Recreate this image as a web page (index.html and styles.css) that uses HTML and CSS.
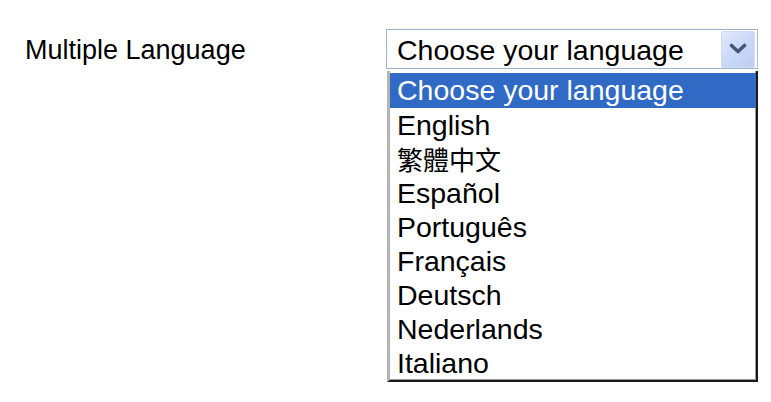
FILE: index.html
```html
<!DOCTYPE html>
<html lang="en">
<head>
    <meta charset="UTF-8">
    <title>Multiple Language</title>
    <link rel="stylesheet" href="styles.css">
</head>
<body>
    <div class="field">
        <div class="label">Multiple Language</div>
        <div class="picker">
            <div class="select">
                <span class="current">Choose your language</span>
                <span class="arrow">
                    <svg width="18" height="12" viewBox="0 0 18 12">
                        <path d="M2.5 2.5 L9 8.5 L15.5 2.5" fill="none" stroke="#46557a" stroke-width="3.6" stroke-linecap="round" stroke-linejoin="round"/>
                    </svg>
                </span>
            </div>
            <ul class="options">
                <li class="active">Choose your language</li>
                <li>English</li>
                <li class="cjk">繁體中文</li>
                <li>Español</li>
                <li>Português</li>
                <li>Français</li>
                <li>Deutsch</li>
                <li>Nederlands</li>
                <li>Italiano</li>
            </ul>
        </div>
    </div>
</body>
</html>
```

FILE: styles.css
```css
body {
    margin: 0;
    background-color: #fff;
    font-family: 'Liberation Sans', Arial, sans-serif;
    color: #000;
}
.field {
    display: flex;
    padding: 29px 0 0 25px;
}
.label {
    width: 361px;
    font-size: 27px;
    line-height: 41px;
    padding-top: 1px;
}
.picker {
    width: 372px;
}
.select {
    height: 38px;
    border: 1px solid #9fb4cc;
    border-right-color: #a9bcd2;
    display: flex;
    align-items: center;
    justify-content: space-between;
    padding: 0 2px 0 10px;
}
.current {
    font-size: 28.5px;
    position: relative;
    top: 1px;
}
.arrow {
    width: 32px;
    height: 35px;
    background: linear-gradient(135deg, #dfe8fc 0%, #c9d8f7 55%, #bccdf2 100%);
    border: 1px solid #d0dcf2;
    border-radius: 2px;
    display: flex;
    align-items: center;
    justify-content: center;
}
.options {
    list-style: none;
    margin: 2px 0 0 1px;
    padding: 2px 0 0;
    border-left: 3px solid #b4b4b4;
    border-right: 2px solid #1a1a1a;
    border-bottom: 2px solid #1a1a1a;
    box-shadow: inset -1px -1px 0 #9a9a9a;
}
.options li {
    height: 34px;
    line-height: 34px;
    padding-left: 7px;
    font-size: 28.5px;
}
.options li.active {
    height: 35px;
    background-color: #316ac5;
    color: #fff;
}
.options li.cjk {
    font-family: 'Noto Sans CJK TC', 'Liberation Sans', sans-serif;
    font-size: 26px;
}
```
